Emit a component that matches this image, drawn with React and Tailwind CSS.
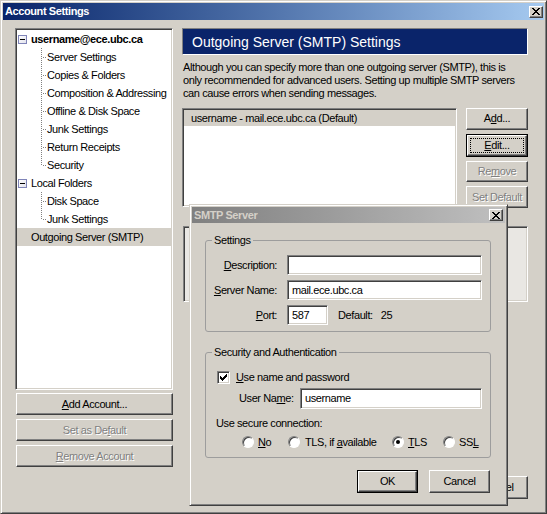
import React from "react";

const raised =
  "bg-[#d4d0c8] border border-t-white border-l-white border-r-[#404040] border-b-[#404040] shadow-[inset_-1px_-1px_#808080]";
const sunken =
  "border border-t-[#808080] border-l-[#808080] border-r-white border-b-white shadow-[inset_1px_1px_#404040,inset_-1px_-1px_#d4d0c8]";
const frame =
  "border border-t-[#d4d0c8] border-l-[#d4d0c8] border-r-[#404040] border-b-[#404040] shadow-[inset_1px_1px_#ffffff,inset_-1px_-1px_#808080] p-[2px] bg-[#d4d0c8]";

const X_PATTERN = ["##....##", ".##..##.", "..####..", "...##...", "..####..", ".##..##.", "##....##"];
const CHECK = ["......#", ".....##", "#...###", "##.###.", "#####..", ".###...", "..#...."];

function Pixels({ pattern, color = "#000" }) {
  const rects = [];
  pattern.forEach((row, y) =>
    [...row].forEach((c, x) => {
      if (c === "#") rects.push(<rect key={`${x}-${y}`} x={x} y={y} width="1" height="1" fill={color} />);
    })
  );
  return (
    <svg width={pattern[0].length} height={pattern.length} shapeRendering="crispEdges" className="block">
      {rects}
    </svg>
  );
}

function CloseBtn() {
  return (
    <div className={`${raised} w-[14px] h-[12px] flex items-center justify-center`}>
      <Pixels pattern={X_PATTERN} />
    </div>
  );
}

function Btn({ children, disabled, def, focus, className = "" }) {
  const inner = (
    <div
      className={`${raised} h-full w-full flex items-center justify-center whitespace-nowrap ${
        disabled ? "text-[#808080] [text-shadow:1px_1px_0_#ffffff]" : "text-black"
      } ${focus ? "outline-1 outline-dotted outline-black -outline-offset-4" : ""}`}
    >
      <span>{children}</span>
    </div>
  );
  if (def) return <div className={`border border-black ${className}`}>{inner}</div>;
  return <div className={className}>{inner}</div>;
}

function Expander() {
  return (
    <span className="w-[9px] h-[9px] border border-[#7f84b8] bg-gradient-to-br from-white to-[#e2e2ec] flex items-center justify-center shrink-0">
      <span className="w-[5px] h-px bg-black" />
    </span>
  );
}

function Conn({ last }) {
  return (
    <svg width="11" height="18" className="shrink-0 block" shapeRendering="crispEdges">
      <line x1="5.5" y1="0" x2="5.5" y2={last ? 10 : 18} stroke="#808080" strokeDasharray="1 1" />
      <line x1="7" y1="9.5" x2="11" y2="9.5" stroke="#808080" strokeDasharray="1 1" />
    </svg>
  );
}

function TopRow({ children, bold, noBox, selected }) {
  return (
    <div className={`h-[18px] flex items-center pl-[1px] ${selected ? "bg-[#d4d0c8]" : ""}`}>
      {noBox ? <span className="w-[9px] shrink-0" /> : <Expander />}
      <span className={`ml-[4px] whitespace-nowrap ${bold ? "font-bold" : ""}`}>{children}</span>
    </div>
  );
}

function ChildRow({ children, last }) {
  return (
    <div className="h-[18px] flex items-center pl-[19px]">
      <Conn last={last} />
      <span className="whitespace-nowrap">{children}</span>
    </div>
  );
}

function Field({ value = "", className = "" }) {
  return (
    <div className={`${sunken} bg-white h-[20px] flex items-center pl-[4px] ${className}`}>
      <span>{value}</span>
    </div>
  );
}

function Radio({ checked, children, className = "" }) {
  return (
    <div className={`flex items-center shrink-0 ${className}`}>
      <span className="w-[12px] h-[12px] rounded-full border border-t-[#808080] border-l-[#808080] border-r-white border-b-white bg-white shadow-[inset_1px_1px_#404040] flex items-center justify-center shrink-0">
        {checked && <span className="w-[4px] h-[4px] rounded-full bg-black" />}
      </span>
      <span className="ml-[4px] whitespace-nowrap">{children}</span>
    </div>
  );
}

function Dialog() {
  return (
    <div className={`absolute left-[188px] top-[203px] w-[319px] h-[302px] ${frame} flex flex-col`}>
      <div className="h-[16px] bg-gradient-to-r from-[#808080] to-[#c0c0c0] flex items-center justify-between pl-[2px] pr-[2px]">
        <span className="font-bold text-[#d4d0c8]">SMTP Server</span>
        <CloseBtn />
      </div>
      <div className="pl-[13px] pr-[14px] flex flex-col">
        <fieldset className="mt-[11px] border border-[#9d9d9d] rounded-[3px] pb-[6px]">
          <legend className="ml-[6px] px-[2px] leading-[13px]">Settings</legend>
          <div className="flex flex-col gap-[5px] pt-[8px]">
            <div className="flex items-center">
              <span className="w-[71px] text-right">
                <u>D</u>escription:
              </span>
              <Field className="ml-[10px] w-[195px]" />
            </div>
            <div className="flex items-center">
              <span className="w-[71px] text-right">
                <u>S</u>erver Name:
              </span>
              <Field value="mail.ece.ubc.ca" className="ml-[10px] w-[195px]" />
            </div>
            <div className="flex items-center">
              <span className="w-[71px] text-right">
                <u>P</u>ort:
              </span>
              <Field value="587" className="ml-[10px] w-[41px]" />
              <span className="ml-[10px]">Default:</span>
              <span className="ml-[8px]">25</span>
            </div>
          </div>
        </fieldset>
        <fieldset className="mt-[14px] border border-[#9d9d9d] rounded-[3px] pb-[8px]">
          <legend className="ml-[6px] px-[2px] leading-[13px]">Security and Authentication</legend>
          <div className="flex flex-col pt-[10px]">
            <div className="flex items-center h-[16px] pl-[11px]">
              <span className={`${sunken} bg-white w-[13px] h-[13px] flex items-center justify-center shrink-0`}>
                <Pixels pattern={CHECK} />
              </span>
              <span className="ml-[6px]">
                <u>U</u>se name and password
              </span>
            </div>
            <div className="flex items-center mt-[3px] pl-[33px]">
              <span className="w-[61px] whitespace-nowrap">
                User Na<u>m</u>e:
              </span>
              <Field value="username" className="w-[182px] h-[21px]" />
            </div>
            <div className="mt-[8px] pl-[10px] h-[13px] flex items-center">Use secure connection:</div>
            <div className="mt-[5px] h-[14px] flex items-center pl-[36px]">
              <Radio className="w-[46px]">
                <u>N</u>o
              </Radio>
              <Radio className="w-[104px]">
                <span className="ml-[1px]">
                  TLS, if <u>a</u>vailable
                </span>
              </Radio>
              <Radio checked className="w-[51px]">
                <u>T</u>LS
              </Radio>
              <Radio>
                SS<u>L</u>
              </Radio>
            </div>
          </div>
        </fieldset>
        <div className="mt-[12px] flex justify-end gap-[11px] pr-[1px]">
          <Btn def className="w-[61px] h-[23px]">
            OK
          </Btn>
          <Btn className="w-[61px] h-[23px]">Cancel</Btn>
        </div>
      </div>
    </div>
  );
}

export default function App() {
  return (
    <div className="font-['Liberation_Sans',Arial,sans-serif] text-[11px] tracking-[-0.4px] text-black leading-[13px]">
      <div className={`relative w-[547px] h-[514px] ${frame} flex flex-col`}>
        <div className="h-[17px] bg-gradient-to-r from-[#0a246a] to-[#a6caf0] flex items-center justify-between pl-[2px] pr-[1px]">
          <span className="font-bold text-white">Account Settings</span>
          <CloseBtn />
        </div>
        <div className="flex pl-[12px] pt-[8px]">
          {/* Left column */}
          <div className="w-[158px] flex flex-col">
            <div className={`${sunken} bg-white h-[362px] p-[1px]`}>
              <TopRow bold>username@ece.ubc.ca</TopRow>
              <ChildRow>Server Settings</ChildRow>
              <ChildRow>Copies &amp; Folders</ChildRow>
              <ChildRow>Composition &amp; Addressing</ChildRow>
              <ChildRow>Offline &amp; Disk Space</ChildRow>
              <ChildRow>Junk Settings</ChildRow>
              <ChildRow>Return Receipts</ChildRow>
              <ChildRow last>Security</ChildRow>
              <TopRow>Local Folders</TopRow>
              <ChildRow>Disk Space</ChildRow>
              <ChildRow last>Junk Settings</ChildRow>
              <TopRow noBox selected>
                Outgoing Server (SMTP)
              </TopRow>
            </div>
            <Btn className="mt-[3px] ml-[1px] h-[22px]">
              <u>A</u>dd Account...
            </Btn>
            <Btn disabled className="mt-[4px] ml-[1px] h-[22px]">
              Set as De<u>f</u>ault
            </Btn>
            <Btn disabled className="mt-[4px] ml-[1px] h-[22px]">
              <u>R</u>emove Account
            </Btn>
          </div>
          {/* Right column */}
          <div className="ml-[9px] w-[346px] flex flex-col">
            <div className="h-[27px] border border-t-[#808080] border-l-[#808080] border-r-white border-b-white bg-[#0a246a] flex items-center pl-[9px]">
              <span className="text-white text-[14px] leading-[16px] tracking-normal">
                Outgoing Server (SMTP) Settings
              </span>
            </div>
            <p className="mt-[6px] ml-[1px] leading-[13px] whitespace-nowrap">
              Although you can specify more than one outgoing server (SMTP), this is
              <br />
              only recommended for advanced users. Setting up multiple SMTP servers
              <br />
              can cause errors when sending messages.
            </p>
            <div className="mt-[8px] h-[100px] flex">
              <div className={`${sunken} bg-white w-[275px] h-[99px] p-[1px]`}>
                <div className="h-[16px] bg-[#d4d0c8] flex items-center pl-[7px] whitespace-nowrap">
                  username - mail.ece.ubc.ca (Default)
                </div>
              </div>
              <div className="ml-[9px] w-[62px] flex flex-col gap-[4px]">
                <Btn className="h-[22px]">
                  A<u>d</u>d...
                </Btn>
                <Btn def focus className="h-[23px]">
                  <u>E</u>dit...
                </Btn>
                <Btn disabled className="h-[22px]">
                  Re<u>m</u>ove
                </Btn>
                <Btn disabled className="h-[22px]">
                  Set Default
                </Btn>
              </div>
            </div>
            <div className={`mt-[18px] ml-[1px] h-[76px] ${sunken} bg-[#e9e7e3]`} />
            <div className="mt-[174px] flex justify-end gap-[6px]">
              <Btn className="w-[61px] h-[23px]">OK</Btn>
              <Btn className="w-[61px] h-[23px]">Cancel</Btn>
            </div>
          </div>
        </div>
        <Dialog />
      </div>
    </div>
  );
}
